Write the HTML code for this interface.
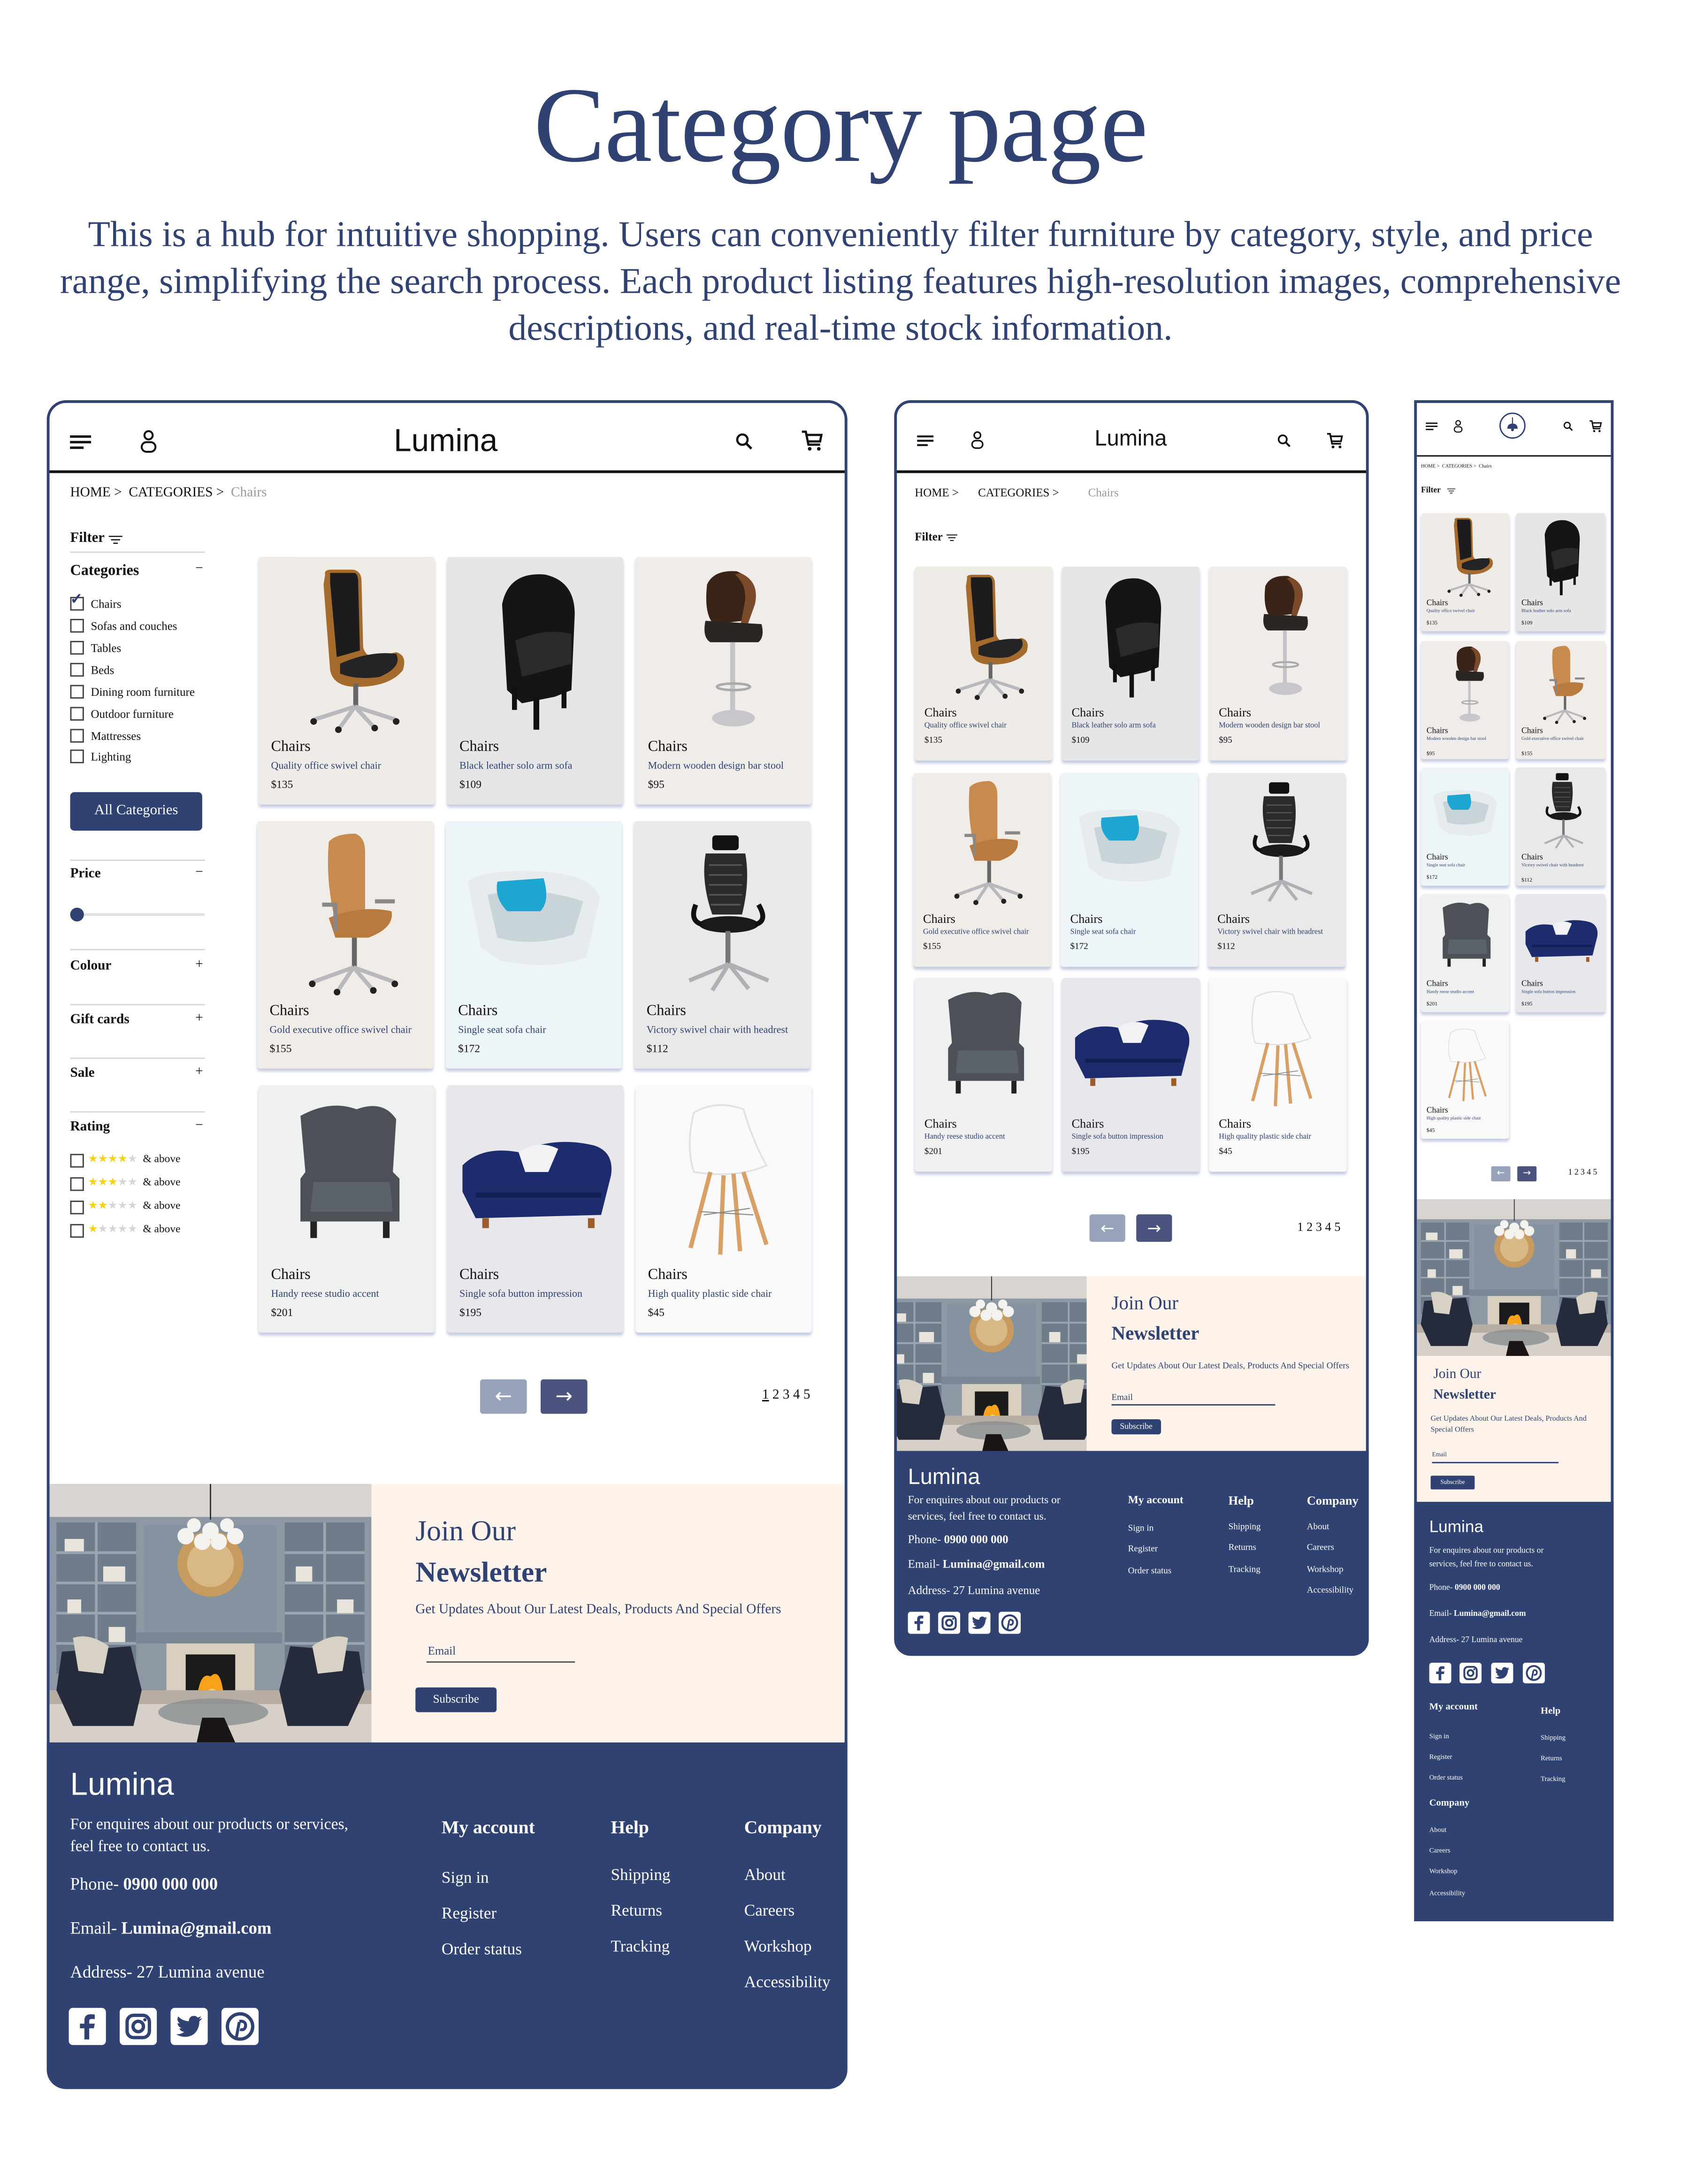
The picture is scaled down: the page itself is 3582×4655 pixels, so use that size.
<!DOCTYPE html>
<html><head><meta charset="utf-8">
<style>
html,body{margin:0;padding:0;background:#fff}
body{width:3582px;height:4653px;overflow:hidden;position:relative}
#w{position:absolute;left:0;top:0;width:1222px;height:1588px;transform:scale(2.93126);transform-origin:0 0;font-family:"Liberation Serif",serif;color:#111}
.t{position:absolute;line-height:1;white-space:nowrap}
.b{position:absolute}
.nv{color:#2f4272}
.frame{position:absolute;border:2px solid #2f4272;box-sizing:border-box;pointer-events:none;z-index:5}
.card{position:absolute;box-shadow:0 2px 2px rgba(150,160,200,.55);border-radius:2px;overflow:hidden}
.card svg{position:absolute;left:0;width:100%}
.card .t{left:0}
.D .card svg{top:8px;height:120px}
.D .c1{left:9px;top:133px;font-size:11px}
.D .c2{left:9px;top:148px;font-size:7.5px;color:#2f4272}
.D .c3{left:9px;top:162px;font-size:8px}
.T .card svg{top:5px;height:92px}
.T .c1{left:7px;top:102px;font-size:9px}
.T .c2{left:7px;top:114px;font-size:5.6px;color:#2f4272}
.T .c3{left:7px;top:124px;font-size:6.5px}
.M .card svg{top:3px;height:58px}
.M .c1{left:4px;top:63px;font-size:6px}
.M .c2{left:4px;top:70px;font-size:3.3px;color:#2f4272;white-space:normal;width:58px;line-height:1.1}
.M .c3{left:4px;top:78px;font-size:4px}
.cb{position:absolute;width:8px;height:8px;border:1px solid #444;background:#fff}
.hr{position:absolute;height:1px;background:#d8d8d8}
.star{color:#f7d117}.gs{color:#d6d6d6}
.wt{color:#fff}
</style></head><body>
<svg width="0" height="0" style="position:absolute">
<defs>
<symbol id="c1" viewBox="0 0 100 100">
<path d="M37 4 Q36 1 41 1 L54 1 Q59 2 59 8 L60 48 Q62 56 72 53 L80 51 Q87 53 84 62 Q76 72 56 72 Q42 72 40 62 L36 10Z" fill="#a56b2d"/>
<path d="M40 3 L55 3 Q57 4 57 9 L58 50 L44 54 L40 9Z" fill="#1c1c1e"/>
<path d="M46 58 Q64 50 80 52 Q84 60 70 66 Q56 68 46 64Z" fill="#242426"/>
<rect x="54" y="70" width="3" height="14" fill="#666"/>
<path d="M55 84 L30 92 M55 84 L80 92 M55 84 L45 98 M55 84 L67 97" stroke="#b9b9bd" stroke-width="2.5" fill="none"/>
<g fill="#222"><circle cx="30" cy="93" r="2"/><circle cx="80" cy="93" r="2"/><circle cx="45" cy="98" r="2"/><circle cx="67" cy="97" r="2"/></g>
</symbol>
<symbol id="c2" viewBox="0 0 100 100">
<path d="M30 22 Q34 2 56 4 Q74 8 74 28 L72 74 L62 78 L42 82 L33 74 Z" fill="#151516"/>
<path d="M38 44 Q56 36 72 40 L72 58 L42 66 Z" fill="#2a2a2c"/>
<rect x="36" y="72" width="3" height="14" fill="#111"/><rect x="49" y="78" width="3.5" height="20" fill="#111"/><rect x="66" y="72" width="3" height="13" fill="#111"/>
</symbol>
<symbol id="c3" viewBox="0 0 100 100">
<path d="M40 10 Q44 1 58 2 Q68 6 67 16 L62 32 L44 34 Q38 28 40 10Z" fill="#3a2418"/>
<path d="M60 3 Q72 8 69 22 L64 36 L60 36 L63 20 Q64 10 57 4Z" fill="#7a4a2a"/>
<path d="M39 32 L73 34 Q75 42 71 45 L42 45 Q37 42 39 32Z" fill="#2a2624"/>
<rect x="54" y="45" width="3" height="42" fill="#c3c3c8"/>
<ellipse cx="56" cy="72" rx="10" ry="2" fill="none" stroke="#aaa" stroke-width="1.5"/>
<ellipse cx="56" cy="91" rx="13" ry="5" fill="#c7c7cb"/>
</symbol>
<symbol id="c4" viewBox="0 0 100 100">
<path d="M40 6 Q44 1 56 1 Q62 3 62 12 L62 50 L44 54 Q38 30 40 6Z" fill="#c98b4d"/>
<path d="M40 52 Q60 44 78 48 Q80 58 64 64 L44 64Z" fill="#b97a3f"/>
<path d="M36 44 L44 44 L44 60 M68 42 L80 42" stroke="#888" stroke-width="2.5" fill="none"/>
<rect x="54" y="64" width="3" height="18" fill="#666"/>
<path d="M55 82 L30 91 M55 82 L80 91 M55 82 L45 97 M55 82 L67 96" stroke="#b9b9bd" stroke-width="2.5" fill="none"/>
<g fill="#222"><circle cx="30" cy="92" r="2"/><circle cx="80" cy="92" r="2"/><circle cx="45" cy="97" r="2"/><circle cx="67" cy="96" r="2"/></g>
</symbol>
<symbol id="c5" viewBox="0 0 100 100">
<path d="M10 30 Q20 22 56 24 Q86 26 90 40 L82 76 Q60 84 30 78 L18 70 Z" fill="#e6ecee"/>
<path d="M22 38 Q50 32 80 42 L74 62 Q50 70 28 64Z" fill="#c9d4d9"/>
<path d="M28 30 L56 28 Q60 42 54 48 L34 48 Q26 40 28 30Z" fill="#1ea6d2"/>
</symbol>
<symbol id="c6" viewBox="0 0 100 100">
<rect x="44" y="2" width="16" height="9" rx="2" fill="#111"/>
<path d="M40 13 L64 13 Q67 30 62 50 L44 50 Q37 30 40 13Z" fill="#2a2a2c"/>
<path d="M42 20 L62 20 M42 26 L62 26 M42 32 L62 32 M42 38 L62 38 M43 44 L61 44" stroke="#555" stroke-width="1"/>
<ellipse cx="54" cy="56" rx="18" ry="5" fill="#1a1a1a"/>
<path d="M34 44 Q30 54 38 56 M72 44 Q78 54 70 56" stroke="#111" stroke-width="3" fill="none"/>
<rect x="52" y="60" width="3" height="20" fill="#777"/>
<path d="M54 80 L30 90 M54 80 L78 90 M54 80 L44 96 M54 80 L66 95" stroke="#b0b0b4" stroke-width="2.5" fill="none"/>
</symbol>
<symbol id="c7" viewBox="0 0 100 100">
<path d="M22 12 Q40 2 56 8 Q72 2 80 14 L78 46 L82 50 L82 76 L22 76 L22 50 L25 46 Z" fill="#4b5157"/>
<path d="M30 52 L76 52 L78 70 L28 70Z" fill="#5c6269"/>
<rect x="28" y="76" width="4" height="10" fill="#222"/><rect x="72" y="76" width="4" height="10" fill="#222"/>
</symbol>
<symbol id="c8" viewBox="0 0 100 100">
<path d="M6 42 Q18 30 40 34 Q62 24 86 30 Q98 34 96 48 L90 72 L14 74 L6 58Z" fill="#1c2c6c"/>
<path d="M40 34 Q52 26 64 32 L58 46 L44 46Z" fill="#f2f2f4"/>
<path d="M14 60 L90 60" stroke="#102050" stroke-width="3"/>
<rect x="18" y="74" width="4" height="6" fill="#9a5c2a"/><rect x="82" y="74" width="4" height="6" fill="#9a5c2a"/>
</symbol>
<symbol id="c9" viewBox="0 0 100 100">
<path d="M32 10 Q46 2 62 8 Q68 28 76 42 Q58 50 32 46 Q27 30 32 10Z" fill="#fafafa" stroke="#e0e0e6"/>
<path d="M42 46 L30 92 M62 46 L76 90 M50 48 L48 96 M56 47 L60 94" stroke="#d9a066" stroke-width="2.6" fill="none"/>
<path d="M36 70 L68 72 M38 72 L66 68" stroke="#888" stroke-width=".6"/>
</symbol>
<symbol id="room" viewBox="0 0 235 188" preserveAspectRatio="xMidYMid slice">
<rect width="235" height="188" fill="#8d98a4"/>
<rect width="235" height="24" fill="#d8d4cf"/>
<rect x="6" y="28" width="58" height="110" fill="#6f7c8a"/><rect x="172" y="28" width="58" height="110" fill="#6f7c8a"/>
<g stroke="#9aa5b0" stroke-width="2"><path d="M6 50h58M6 72h58M6 94h58M6 116h58M172 50h58M172 72h58M172 94h58M172 116h58M35 28v90M201 28v90"/></g>
<g fill="#e8e4dc"><rect x="12" y="40" width="14" height="9"/><rect x="40" y="60" width="16" height="11"/><rect x="180" y="60" width="12" height="11"/><rect x="210" y="84" width="12" height="10"/><rect x="14" y="84" width="10" height="10"/><rect x="44" y="104" width="12" height="11"/></g>
<rect x="70" y="30" width="96" height="85" fill="#8592a0"/>
<circle cx="118" cy="58" r="24" fill="#c79b5f"/><circle cx="118" cy="58" r="17" fill="#d8b884"/>
<g fill="#f4f2ee"><circle cx="100" cy="38" r="6"/><circle cx="112" cy="42" r="6"/><circle cx="124" cy="42" r="6"/><circle cx="136" cy="38" r="6"/><circle cx="106" cy="30" r="5"/><circle cx="130" cy="30" r="5"/><circle cx="118" cy="34" r="6"/></g>
<path d="M118 0v26" stroke="#333"/>
<rect x="64" y="108" width="106" height="8" fill="#7a8795"/>
<rect x="86" y="116" width="64" height="46" fill="#d9cfbf"/><rect x="100" y="124" width="36" height="36" fill="#1a1a1a"/>
<path d="M108 158 Q110 136 118 140 Q126 132 128 158Z" fill="#f7a21a"/><path d="M112 158 Q116 146 122 150 Q124 150 124 158Z" fill="#ffe07a"/>
<rect x="0" y="150" width="235" height="38" fill="#b7ada2"/>
<path d="M0 160 L235 160 L235 188 L0 188Z" fill="#d6d0c8"/>
<path d="M10 122 L60 118 L68 150 L62 176 L18 176 L6 150Z" fill="#262b3c"/><path d="M18 112 Q30 108 44 118 L40 138 L22 136Z" fill="#d8d2c6"/>
<path d="M226 122 L176 118 L168 150 L174 176 L218 176 L230 150Z" fill="#262b3c"/><path d="M218 112 Q206 108 192 118 L196 138 L214 136Z" fill="#d8d2c6"/>
<ellipse cx="120" cy="166" rx="40" ry="10" fill="#8a8e92" opacity=".8"/><path d="M112 170 L108 188 L136 188 L128 170Z" fill="#1a1414"/>
</symbol>
<symbol id="fb" viewBox="0 0 20 20"><path d="M11 17 V11 H13.5 L14 8.5 H11 V7 Q11 6 12.2 6 H14 V3.6 Q13 3.4 11.8 3.4 Q8.4 3.4 8.4 6.8 V8.5 H6 V11 H8.4 V17Z" fill="#2f4272"/></symbol>
<symbol id="ig" viewBox="0 0 20 20"><rect x="4" y="4" width="12" height="12" rx="3.5" fill="none" stroke="#2f4272" stroke-width="1.8"/><circle cx="10" cy="10" r="2.8" fill="none" stroke="#2f4272" stroke-width="1.8"/><circle cx="13.6" cy="6.4" r=".9" fill="#2f4272"/></symbol>
<symbol id="tw" viewBox="0 0 20 20"><path d="M17 5.5 Q16 6 15.2 6.1 Q16.1 5.5 16.4 4.5 Q15.5 5 14.6 5.2 Q13.8 4.3 12.5 4.3 Q10 4.4 9.8 7.2 Q6.4 7 4.1 4.6 Q3 6.8 5 8.4 Q4.3 8.4 3.8 8.1 Q3.8 10.2 6 10.9 Q5.3 11.1 4.7 11 Q5.4 12.8 7.4 12.9 Q5.6 14.3 3 14.2 Q5.2 15.6 8 15.6 Q13.8 15.4 15.3 9.4 Q15.5 8.4 15.5 7.2 Q16.5 6.5 17 5.5Z" fill="#2f4272"/></symbol>
<symbol id="pi" viewBox="0 0 20 20"><circle cx="10" cy="10" r="6.8" fill="none" stroke="#2f4272" stroke-width="1.8"/><path d="M9.6 7.2 Q13 6.8 13 9.6 Q12.6 12.4 10 11.6 M9.6 7.6 L8 16" stroke="#2f4272" stroke-width="1.6" fill="none"/></symbol>
<symbol id="ham" viewBox="0 0 20 12"><path d="M1 1.5h17M1 6h17M1 10.5h11" stroke="#111" stroke-width="2"/></symbol>
<symbol id="usr" viewBox="0 0 14 18"><circle cx="7" cy="4.5" r="3" fill="none" stroke="#111" stroke-width="1.4"/><rect x="2" y="9.5" width="10" height="7" rx="3.5" fill="none" stroke="#111" stroke-width="1.4"/></symbol>
<symbol id="srch" viewBox="0 0 16 16"><circle cx="6.5" cy="6.5" r="4.3" fill="none" stroke="#111" stroke-width="1.8"/><path d="M9.6 9.6 L14 14" stroke="#111" stroke-width="2"/></symbol>
<symbol id="cart" viewBox="0 0 18 18"><path d="M1 2 H4 L6 12 H15 M4.6 4.5 H16 L15 9.5 H5.6" fill="none" stroke="#111" stroke-width="1.7"/><circle cx="7" cy="15.2" r="1.4" fill="#111"/><circle cx="14" cy="15.2" r="1.4" fill="#111"/></symbol>
<symbol id="flt" viewBox="0 0 12 8"><path d="M0 1h12M2 4h8M4 7h4" stroke="#111" stroke-width="1"/></symbol>
</defs></svg>

<div id="w">
<!-- Title -->
<div class="t nv" style="left:0;width:1222px;text-align:center;top:52px;font-size:78px;letter-spacing:-0.5px">Category page</div>
<div class="t nv" style="left:0;width:1222px;text-align:center;top:157px;font-size:26.5px">This is a hub for intuitive shopping. Users can conveniently filter furniture by category, style, and price</div>
<div class="t nv" style="left:0;width:1222px;text-align:center;top:191px;font-size:26.5px">range, simplifying the search process. Each product listing features high-resolution images, comprehensive</div>
<div class="t nv" style="left:0;width:1222px;text-align:center;top:225px;font-size:26.5px">descriptions, and real-time stock information.</div>

<!-- ================= DESKTOP ================= -->
<div class="D">
<div class="frame" style="left:34px;top:291px;width:582px;height:1228px;border-radius:14px"></div>
<svg class="b" style="left:50px;top:316px" width="18" height="11"><use href="#ham"/></svg>
<svg class="b" style="left:101px;top:312px" width="14" height="18"><use href="#usr"/></svg>
<div class="t" style="left:224px;width:200px;text-align:center;top:309px;font-size:23px;font-family:'Liberation Sans',sans-serif">Lumina</div>
<svg class="b" style="left:534px;top:314px" width="14" height="14"><use href="#srch"/></svg>
<svg class="b" style="left:582px;top:312px" width="17" height="17"><use href="#cart"/></svg>
<div class="b" style="left:35px;top:342px;width:580px;height:1.5px;background:#111"></div>
<div class="t" style="left:51px;top:354px;font-size:10px">HOME &gt;&nbsp; CATEGORIES &gt;&nbsp; <span style="color:#999">Chairs</span></div>
<div class="t" style="left:51px;top:387px;font-size:10.5px;font-weight:bold">Filter</div>
<svg class="b" style="left:79px;top:389px" width="10" height="7"><use href="#flt"/></svg>
<div class="hr" style="left:51px;top:401px;width:98px"></div>
<div class="t" style="left:51px;top:410px;font-size:11px;font-weight:bold">Categories</div>
<div class="t" style="left:142px;top:409px;font-size:10px">−</div>
<div class="cb" style="left:51px;top:434px"></div><div class="t nv" style="left:51px;top:431px;font-size:11px;font-weight:bold">✓</div>
<div class="t" style="left:66px;top:435px;font-size:8.5px">Chairs</div>
<div class="cb" style="left:51px;top:450px"></div><div class="t" style="left:66px;top:451px;font-size:8.5px">Sofas and couches</div>
<div class="cb" style="left:51px;top:466px"></div><div class="t" style="left:66px;top:467px;font-size:8.5px">Tables</div>
<div class="cb" style="left:51px;top:482px"></div><div class="t" style="left:66px;top:483px;font-size:8.5px">Beds</div>
<div class="cb" style="left:51px;top:498px"></div><div class="t" style="left:66px;top:499px;font-size:8.5px">Dining room furniture</div>
<div class="cb" style="left:51px;top:514px"></div><div class="t" style="left:66px;top:515px;font-size:8.5px">Outdoor furniture</div>
<div class="cb" style="left:51px;top:530px"></div><div class="t" style="left:66px;top:531px;font-size:8.5px">Mattresses</div>
<div class="cb" style="left:51px;top:545px"></div><div class="t" style="left:66px;top:546px;font-size:8.5px">Lighting</div>
<div class="b" style="left:51px;top:576px;width:96px;height:28px;background:#2f4272;border-radius:3px"></div>
<div class="t wt" style="left:51px;width:96px;text-align:center;top:585px;font-size:10.5px">All Categories</div>
<div class="hr" style="left:51px;top:625px;width:98px"></div>
<div class="t" style="left:51px;top:631px;font-size:10px;font-weight:bold">Price</div><div class="t" style="left:142px;top:630px;font-size:10px">−</div>
<div class="b" style="left:51px;top:664px;width:98px;height:2px;background:#e2e2e2;border-radius:1px"></div>
<div class="b" style="left:51px;top:660px;width:10px;height:10px;background:#2f4272;border-radius:50%"></div>
<div class="hr" style="left:51px;top:690px;width:98px"></div>
<div class="t" style="left:51px;top:698px;font-size:10px;font-weight:bold">Colour</div><div class="t" style="left:142px;top:697px;font-size:10px">+</div>
<div class="hr" style="left:51px;top:730px;width:98px"></div>
<div class="t" style="left:51px;top:737px;font-size:10px;font-weight:bold">Gift cards</div><div class="t" style="left:142px;top:736px;font-size:10px">+</div>
<div class="hr" style="left:51px;top:769px;width:98px"></div>
<div class="t" style="left:51px;top:776px;font-size:10px;font-weight:bold">Sale</div><div class="t" style="left:142px;top:775px;font-size:10px">+</div>
<div class="hr" style="left:51px;top:808px;width:98px"></div>
<div class="t" style="left:51px;top:815px;font-size:10px;font-weight:bold">Rating</div><div class="t" style="left:142px;top:814px;font-size:10px">−</div>
<div class="cb" style="left:51px;top:839px"></div><div class="t" style="left:64px;top:839px;font-size:8px"><span class="star">★★★★</span><span class="gs">★</span> &nbsp;&amp; above</div>
<div class="cb" style="left:51px;top:856px"></div><div class="t" style="left:64px;top:856px;font-size:8px"><span class="star">★★★</span><span class="gs">★★</span> &nbsp;&amp; above</div>
<div class="cb" style="left:51px;top:873px"></div><div class="t" style="left:64px;top:873px;font-size:8px"><span class="star">★★</span><span class="gs">★★★</span> &nbsp;&amp; above</div>
<div class="cb" style="left:51px;top:890px"></div><div class="t" style="left:64px;top:890px;font-size:8px"><span class="star">★</span><span class="gs">★★★★</span> &nbsp;&amp; above</div>

<div class="card" style="left:188px;top:405px;width:128px;height:180px;background:#efece8"><svg viewBox="0 0 100 100"><use href="#c1"/></svg><div class="t c1">Chairs</div><div class="t c2">Quality office swivel chair</div><div class="t c3">$135</div></div>
<div class="card" style="left:325px;top:405px;width:128px;height:180px;background:#e6e6e7"><svg viewBox="0 0 100 100"><use href="#c2"/></svg><div class="t c1">Chairs</div><div class="t c2">Black leather solo arm sofa</div><div class="t c3">$109</div></div>
<div class="card" style="left:462px;top:405px;width:128px;height:180px;background:#efecea"><svg viewBox="0 0 100 100"><use href="#c3"/></svg><div class="t c1">Chairs</div><div class="t c2">Modern wooden design bar stool</div><div class="t c3">$95</div></div>
<div class="card" style="left:187px;top:597px;width:128px;height:180px;background:#f0ece8"><svg viewBox="0 0 100 100"><use href="#c4"/></svg><div class="t c1">Chairs</div><div class="t c2">Gold executive office swivel chair</div><div class="t c3">$155</div></div>
<div class="card" style="left:324px;top:597px;width:128px;height:180px;background:#eef5f8"><svg viewBox="0 0 100 100"><use href="#c5"/></svg><div class="t c1">Chairs</div><div class="t c2">Single seat sofa chair</div><div class="t c3">$172</div></div>
<div class="card" style="left:461px;top:597px;width:128px;height:180px;background:#e9e9ea"><svg viewBox="0 0 100 100"><use href="#c6"/></svg><div class="t c1">Chairs</div><div class="t c2">Victory swivel chair with headrest</div><div class="t c3">$112</div></div>
<div class="card" style="left:188px;top:789px;width:128px;height:180px;background:#eff0f0"><svg viewBox="0 0 100 100"><use href="#c7"/></svg><div class="t c1">Chairs</div><div class="t c2">Handy reese studio accent</div><div class="t c3">$201</div></div>
<div class="card" style="left:325px;top:789px;width:128px;height:180px;background:#e8e8ec"><svg viewBox="0 0 100 100"><use href="#c8"/></svg><div class="t c1">Chairs</div><div class="t c2">Single sofa button impression</div><div class="t c3">$195</div></div>
<div class="card" style="left:462px;top:789px;width:128px;height:180px;background:#f9f9fa"><svg viewBox="0 0 100 100"><use href="#c9"/></svg><div class="t c1">Chairs</div><div class="t c2">High quality plastic side chair</div><div class="t c3">$45</div></div>

<div class="b" style="left:349px;top:1003px;width:34px;height:25px;background:#97a2bb;border-radius:2px"></div>
<div class="t wt" style="left:349px;width:34px;text-align:center;top:1008px;font-size:15px;font-family:'DejaVu Sans',sans-serif">←</div>
<div class="b" style="left:393px;top:1003px;width:34px;height:25px;background:#4b547e;border-radius:2px"></div>
<div class="t wt" style="left:393px;width:34px;text-align:center;top:1008px;font-size:15px;font-family:'DejaVu Sans',sans-serif">→</div>
<div class="t" style="left:554px;top:1010px;font-size:10px"><span style="text-decoration:underline">1</span> 2 3 4 5</div>

<svg class="b" style="left:35px;top:1079px" width="235" height="188"><use href="#room"/></svg>
<div class="b" style="left:270px;top:1079px;width:344px;height:188px;background:#fdf3ea"></div>
<div class="t nv" style="left:302px;top:1103px;font-size:21px">Join Our</div>
<div class="t nv" style="left:302px;top:1133px;font-size:21px;font-weight:bold">Newsletter</div>
<div class="t nv" style="left:302px;top:1166px;font-size:10px">Get Updates About Our Latest Deals, Products And Special Offers</div>
<div class="t nv" style="left:311px;top:1196px;font-size:8.5px">Email</div>
<div class="b" style="left:310px;top:1208px;width:108px;height:1px;background:#555"></div>
<div class="b" style="left:302px;top:1227px;width:59px;height:18px;background:#2f4272;border-radius:2px"></div>
<div class="t wt" style="left:302px;width:59px;text-align:center;top:1231px;font-size:8.5px">Subscribe</div>

<div class="b" style="left:34px;top:1267px;width:582px;height:252px;background:#2f4272;border-radius:0 0 14px 14px"></div>
<div class="t wt" style="left:51px;top:1286px;font-size:23px;font-family:'Liberation Sans',sans-serif">Lumina</div>
<div class="t wt" style="left:51px;top:1322px;font-size:11.5px">For enquires about our products or services,</div>
<div class="t wt" style="left:51px;top:1338px;font-size:11.5px">feel free to contact us.</div>
<div class="t wt" style="left:51px;top:1364px;font-size:12.5px">Phone- <b>0900 000 000</b></div>
<div class="t wt" style="left:51px;top:1396px;font-size:12.5px">Email- <b>Lumina@gmail.com</b></div>
<div class="t wt" style="left:51px;top:1428px;font-size:12.5px">Address- 27 Lumina avenue</div>
<div class="t wt" style="left:321px;top:1322px;font-size:13.5px;font-weight:bold">My account</div>
<div class="t wt" style="left:444px;top:1322px;font-size:13.5px;font-weight:bold">Help</div>
<div class="t wt" style="left:541px;top:1322px;font-size:13.5px;font-weight:bold">Company</div>
<div class="t wt" style="left:321px;top:1359px;font-size:12px">Sign in</div>
<div class="t wt" style="left:321px;top:1385px;font-size:12px">Register</div>
<div class="t wt" style="left:321px;top:1411px;font-size:12px">Order status</div>
<div class="t wt" style="left:444px;top:1357px;font-size:12px">Shipping</div>
<div class="t wt" style="left:444px;top:1383px;font-size:12px">Returns</div>
<div class="t wt" style="left:444px;top:1409px;font-size:12px">Tracking</div>
<div class="t wt" style="left:541px;top:1357px;font-size:12px">About</div>
<div class="t wt" style="left:541px;top:1383px;font-size:12px">Careers</div>
<div class="t wt" style="left:541px;top:1409px;font-size:12px">Workshop</div>
<div class="t wt" style="left:541px;top:1435px;font-size:12px">Accessibility</div>
<div class="b" style="left:50px;top:1460px;width:27px;height:27px;background:#fff;border-radius:3px"><svg width="27" height="27"><use href="#fb"/></svg></div>
<div class="b" style="left:87px;top:1460px;width:27px;height:27px;background:#fff;border-radius:3px"><svg width="27" height="27"><use href="#ig"/></svg></div>
<div class="b" style="left:124px;top:1460px;width:27px;height:27px;background:#fff;border-radius:3px"><svg width="27" height="27"><use href="#tw"/></svg></div>
<div class="b" style="left:161px;top:1460px;width:27px;height:27px;background:#fff;border-radius:3px"><svg width="27" height="27"><use href="#pi"/></svg></div>
</div>

<!-- ================= TABLET ================= -->
<div class="T">
<div class="frame" style="left:650px;top:291px;width:345px;height:913px;border-radius:12px"></div>
<svg class="b" style="left:666px;top:316px" width="14" height="9"><use href="#ham"/></svg>
<svg class="b" style="left:705px;top:313px" width="11" height="14"><use href="#usr"/></svg>
<div class="t" style="left:752px;width:140px;text-align:center;top:312px;font-size:16px;font-family:'Liberation Sans',sans-serif">Lumina</div>
<svg class="b" style="left:928px;top:315px" width="11" height="11"><use href="#srch"/></svg>
<svg class="b" style="left:964px;top:314px" width="13" height="13"><use href="#cart"/></svg>
<div class="b" style="left:651px;top:342px;width:343px;height:1.5px;background:#111"></div>
<div class="t" style="left:665px;top:354px;font-size:8.5px">HOME &gt;</div>
<div class="t" style="left:711px;top:354px;font-size:8.5px">CATEGORIES &gt;</div>
<div class="t" style="left:791px;top:354px;font-size:8.5px;color:#999">Chairs</div>
<div class="t" style="left:665px;top:386px;font-size:8.5px;font-weight:bold">Filter</div>
<svg class="b" style="left:688px;top:388px" width="8" height="6"><use href="#flt"/></svg>

<div class="card" style="left:665px;top:412px;width:100px;height:141px;background:#efece8"><svg viewBox="0 0 100 100"><use href="#c1"/></svg><div class="t c1">Chairs</div><div class="t c2">Quality office swivel chair</div><div class="t c3">$135</div></div>
<div class="card" style="left:772px;top:412px;width:100px;height:141px;background:#e6e6e7"><svg viewBox="0 0 100 100"><use href="#c2"/></svg><div class="t c1">Chairs</div><div class="t c2">Black leather solo arm sofa</div><div class="t c3">$109</div></div>
<div class="card" style="left:879px;top:412px;width:100px;height:141px;background:#efecea"><svg viewBox="0 0 100 100"><use href="#c3"/></svg><div class="t c1">Chairs</div><div class="t c2">Modern wooden design bar stool</div><div class="t c3">$95</div></div>
<div class="card" style="left:664px;top:562px;width:100px;height:141px;background:#f0ece8"><svg viewBox="0 0 100 100"><use href="#c4"/></svg><div class="t c1">Chairs</div><div class="t c2">Gold executive office swivel chair</div><div class="t c3">$155</div></div>
<div class="card" style="left:771px;top:562px;width:100px;height:141px;background:#eef5f8"><svg viewBox="0 0 100 100"><use href="#c5"/></svg><div class="t c1">Chairs</div><div class="t c2">Single seat sofa chair</div><div class="t c3">$172</div></div>
<div class="card" style="left:878px;top:562px;width:100px;height:141px;background:#e9e9ea"><svg viewBox="0 0 100 100"><use href="#c6"/></svg><div class="t c1">Chairs</div><div class="t c2">Victory swivel chair with headrest</div><div class="t c3">$112</div></div>
<div class="card" style="left:665px;top:711px;width:100px;height:141px;background:#eff0f0"><svg viewBox="0 0 100 100"><use href="#c7"/></svg><div class="t c1">Chairs</div><div class="t c2">Handy reese studio accent</div><div class="t c3">$201</div></div>
<div class="card" style="left:772px;top:711px;width:100px;height:141px;background:#e8e8ec"><svg viewBox="0 0 100 100"><use href="#c8"/></svg><div class="t c1">Chairs</div><div class="t c2">Single sofa button impression</div><div class="t c3">$195</div></div>
<div class="card" style="left:879px;top:711px;width:100px;height:141px;background:#f9f9fa"><svg viewBox="0 0 100 100"><use href="#c9"/></svg><div class="t c1">Chairs</div><div class="t c2">High quality plastic side chair</div><div class="t c3">$45</div></div>

<div class="b" style="left:792px;top:883px;width:26px;height:20px;background:#97a2bb;border-radius:2px"></div>
<div class="t wt" style="left:792px;width:26px;text-align:center;top:887px;font-size:12px;font-family:'DejaVu Sans',sans-serif">←</div>
<div class="b" style="left:826px;top:883px;width:26px;height:20px;background:#4b547e;border-radius:2px"></div>
<div class="t wt" style="left:826px;width:26px;text-align:center;top:887px;font-size:12px;font-family:'DejaVu Sans',sans-serif">→</div>
<div class="t" style="left:943px;top:888px;font-size:9px">1 2 3 4 5</div>

<svg class="b" style="left:651px;top:928px" width="139" height="127"><use href="#room"/></svg>
<div class="b" style="left:790px;top:928px;width:204px;height:127px;background:#fdf3ea"></div>
<div class="t nv" style="left:808px;top:942px;font-size:14px">Join Our</div>
<div class="t nv" style="left:808px;top:964px;font-size:14px;font-weight:bold">Newsletter</div>
<div class="t nv" style="left:808px;top:990px;font-size:6.5px;width:175px;white-space:normal;line-height:1.35">Get Updates About Our Latest Deals, Products And Special Offers</div>
<div class="t nv" style="left:808px;top:1014px;font-size:6.5px">Email</div>
<div class="b" style="left:808px;top:1021px;width:119px;height:1px;background:#2f4272"></div>
<div class="b" style="left:808px;top:1032px;width:36px;height:11px;background:#2f4272;border-radius:2px"></div>
<div class="t wt" style="left:808px;width:36px;text-align:center;top:1034.5px;font-size:6px">Subscribe</div>

<div class="b" style="left:650px;top:1055px;width:345px;height:149px;background:#2f4272;border-radius:0 0 12px 12px"></div>
<div class="t wt" style="left:660px;top:1067px;font-size:16px;font-family:'Liberation Sans',sans-serif">Lumina</div>
<div class="t wt" style="left:660px;top:1087px;font-size:8px">For enquires about our products or</div>
<div class="t wt" style="left:660px;top:1099px;font-size:8px">services, feel free to contact us.</div>
<div class="t wt" style="left:660px;top:1115px;font-size:8.5px">Phone- <b>0900 000 000</b></div>
<div class="t wt" style="left:660px;top:1133px;font-size:8.5px">Email- <b>Lumina@gmail.com</b></div>
<div class="t wt" style="left:660px;top:1152px;font-size:8.5px">Address- 27 Lumina avenue</div>
<div class="t wt" style="left:820px;top:1087px;font-size:8px;font-weight:bold">My account</div>
<div class="t wt" style="left:893px;top:1087px;font-size:9px;font-weight:bold">Help</div>
<div class="t wt" style="left:950px;top:1087px;font-size:9px;font-weight:bold">Company</div>
<div class="t wt" style="left:820px;top:1109px;font-size:6.5px">Sign in</div>
<div class="t wt" style="left:820px;top:1124px;font-size:6.5px">Register</div>
<div class="t wt" style="left:820px;top:1140px;font-size:6.5px">Order status</div>
<div class="t wt" style="left:893px;top:1108px;font-size:6.5px">Shipping</div>
<div class="t wt" style="left:893px;top:1123px;font-size:6.5px">Returns</div>
<div class="t wt" style="left:893px;top:1139px;font-size:6.5px">Tracking</div>
<div class="t wt" style="left:950px;top:1108px;font-size:6.5px">About</div>
<div class="t wt" style="left:950px;top:1123px;font-size:6.5px">Careers</div>
<div class="t wt" style="left:950px;top:1139px;font-size:6.5px">Workshop</div>
<div class="t wt" style="left:950px;top:1154px;font-size:6.5px">Accessibility</div>
<div class="b" style="left:660px;top:1172px;width:16px;height:16px;background:#fff;border-radius:2px"><svg width="16" height="16"><use href="#fb"/></svg></div>
<div class="b" style="left:682px;top:1172px;width:16px;height:16px;background:#fff;border-radius:2px"><svg width="16" height="16"><use href="#ig"/></svg></div>
<div class="b" style="left:704px;top:1172px;width:16px;height:16px;background:#fff;border-radius:2px"><svg width="16" height="16"><use href="#tw"/></svg></div>
<div class="b" style="left:726px;top:1172px;width:16px;height:16px;background:#fff;border-radius:2px"><svg width="16" height="16"><use href="#pi"/></svg></div>
</div>

<!-- ================= MOBILE ================= -->
<div class="M">
<div class="frame" style="left:1028px;top:291px;width:145px;height:1106px"></div>
<svg class="b" style="left:1036px;top:307px" width="10" height="6"><use href="#ham"/></svg>
<svg class="b" style="left:1056px;top:305px" width="8" height="10"><use href="#usr"/></svg>
<div class="b" style="left:1090px;top:300px;width:19px;height:19px;border:1px solid #2f4272;border-radius:50%;box-sizing:border-box"></div>
<svg class="b" style="left:1092px;top:302px" width="15" height="15" viewBox="0 0 20 20"><path d="M10 2v7" stroke="#2f4272" stroke-width="1"/><path d="M5 13 Q5 8 10 8 Q15 8 15 13Z" fill="#2f4272"/><circle cx="10" cy="14" r="1.4" fill="#2f4272"/></svg>
<svg class="b" style="left:1136px;top:306px" width="8" height="8"><use href="#srch"/></svg>
<svg class="b" style="left:1155px;top:305px" width="10" height="10"><use href="#cart"/></svg>
<div class="b" style="left:1030px;top:331px;width:141px;height:1px;background:#111"></div>
<div class="t" style="left:1033px;top:338px;font-size:3.6px">HOME &gt; &nbsp;CATEGORIES &gt; &nbsp;Chairs</div>
<div class="t" style="left:1033px;top:354px;font-size:6px;font-weight:bold">Filter</div>
<svg class="b" style="left:1052px;top:355px" width="6" height="4"><use href="#flt"/></svg>

<div class="card" style="left:1033px;top:373px;width:64px;height:86px;background:#efece8"><svg viewBox="0 0 100 100"><use href="#c1"/></svg><div class="t c1">Chairs</div><div class="t c2">Quality office swivel chair</div><div class="t c3">$135</div></div>
<div class="card" style="left:1102px;top:373px;width:65px;height:86px;background:#e6e6e7"><svg viewBox="0 0 100 100"><use href="#c2"/></svg><div class="t c1">Chairs</div><div class="t c2">Black leather solo arm sofa</div><div class="t c3">$109</div></div>
<div class="card" style="left:1033px;top:466px;width:64px;height:86px;background:#efecea"><svg viewBox="0 0 100 100"><use href="#c3"/></svg><div class="t c1">Chairs</div><div class="t c2">Modern wooden design bar stool</div><div class="t c3" style="top:80px">$95</div></div>
<div class="card" style="left:1102px;top:466px;width:65px;height:86px;background:#f0ece8"><svg viewBox="0 0 100 100"><use href="#c4"/></svg><div class="t c1">Chairs</div><div class="t c2">Gold executive office swivel chair</div><div class="t c3" style="top:80px">$155</div></div>
<div class="card" style="left:1033px;top:558px;width:64px;height:86px;background:#eef5f8"><svg viewBox="0 0 100 100"><use href="#c5"/></svg><div class="t c1">Chairs</div><div class="t c2">Single seat sofa chair</div><div class="t c3">$172</div></div>
<div class="card" style="left:1102px;top:558px;width:65px;height:86px;background:#e9e9ea"><svg viewBox="0 0 100 100"><use href="#c6"/></svg><div class="t c1">Chairs</div><div class="t c2">Victory swivel chair with headrest</div><div class="t c3" style="top:80px">$112</div></div>
<div class="card" style="left:1033px;top:650px;width:64px;height:86px;background:#eff0f0"><svg viewBox="0 0 100 100"><use href="#c7"/></svg><div class="t c1">Chairs</div><div class="t c2">Handy reese studio accent</div><div class="t c3">$201</div></div>
<div class="card" style="left:1102px;top:650px;width:65px;height:86px;background:#e8e8ec"><svg viewBox="0 0 100 100"><use href="#c8"/></svg><div class="t c1">Chairs</div><div class="t c2">Single sofa button impression</div><div class="t c3">$195</div></div>
<div class="card" style="left:1033px;top:742px;width:64px;height:86px;background:#f9f9fa"><svg viewBox="0 0 100 100"><use href="#c9"/></svg><div class="t c1">Chairs</div><div class="t c2">High quality plastic side chair</div><div class="t c3">$45</div></div>

<div class="b" style="left:1084px;top:848px;width:14px;height:11px;background:#97a2bb;border-radius:1px"></div>
<div class="t wt" style="left:1084px;width:14px;text-align:center;top:850px;font-size:7px;font-family:'DejaVu Sans',sans-serif">←</div>
<div class="b" style="left:1103px;top:848px;width:14px;height:11px;background:#4b547e;border-radius:1px"></div>
<div class="t wt" style="left:1103px;width:14px;text-align:center;top:850px;font-size:7px;font-family:'DejaVu Sans',sans-serif">→</div>
<div class="t" style="left:1140px;top:850px;font-size:6px">1 2 3 4 5</div>

<svg class="b" style="left:1030px;top:872px" width="141" height="114"><use href="#room"/></svg>
<div class="b" style="left:1030px;top:986px;width:141px;height:106px;background:#fdf3ea"></div>
<div class="t nv" style="left:1042px;top:995px;font-size:10px">Join Our</div>
<div class="t nv" style="left:1042px;top:1010px;font-size:10px;font-weight:bold">Newsletter</div>
<div class="t nv" style="left:1040px;top:1029px;font-size:5.5px;width:125px;white-space:normal;line-height:1.4">Get Updates About Our Latest Deals, Products And Special Offers</div>
<div class="t nv" style="left:1041px;top:1056px;font-size:4.5px">Email</div>
<div class="b" style="left:1041px;top:1063px;width:92px;height:.6px;background:#2f4272"></div>
<div class="b" style="left:1040px;top:1073px;width:32px;height:10px;background:#2f4272;border-radius:1px"></div>
<div class="t wt" style="left:1040px;width:32px;text-align:center;top:1076px;font-size:4.5px">Subscribe</div>

<div class="b" style="left:1028px;top:1092px;width:145px;height:305px;background:#2f4272"></div>
<div class="t wt" style="left:1039px;top:1104px;font-size:12px;font-family:'Liberation Sans',sans-serif">Lumina</div>
<div class="t wt" style="left:1039px;top:1125px;font-size:6px">For enquires about our products or</div>
<div class="t wt" style="left:1039px;top:1135px;font-size:6px">services, feel free to contact us.</div>
<div class="t wt" style="left:1039px;top:1152px;font-size:6px">Phone- <b>0900 000 000</b></div>
<div class="t wt" style="left:1039px;top:1171px;font-size:6px">Email- <b>Lumina@gmail.com</b></div>
<div class="t wt" style="left:1039px;top:1190px;font-size:6px">Address- 27 Lumina avenue</div>
<div class="b" style="left:1039px;top:1209px;width:16px;height:15px;background:#fff;border-radius:2px"><svg width="16" height="15"><use href="#fb"/></svg></div>
<div class="b" style="left:1061px;top:1209px;width:16px;height:15px;background:#fff;border-radius:2px"><svg width="16" height="15"><use href="#ig"/></svg></div>
<div class="b" style="left:1084px;top:1209px;width:16px;height:15px;background:#fff;border-radius:2px"><svg width="16" height="15"><use href="#tw"/></svg></div>
<div class="b" style="left:1107px;top:1209px;width:16px;height:15px;background:#fff;border-radius:2px"><svg width="16" height="15"><use href="#pi"/></svg></div>
<div class="t wt" style="left:1039px;top:1238px;font-size:7px;font-weight:bold">My account</div>
<div class="t wt" style="left:1120px;top:1241px;font-size:7px;font-weight:bold">Help</div>
<div class="t wt" style="left:1039px;top:1261px;font-size:5px">Sign in</div>
<div class="t wt" style="left:1039px;top:1276px;font-size:5px">Register</div>
<div class="t wt" style="left:1039px;top:1291px;font-size:5px">Order status</div>
<div class="t wt" style="left:1120px;top:1262px;font-size:5px">Shipping</div>
<div class="t wt" style="left:1120px;top:1277px;font-size:5px">Returns</div>
<div class="t wt" style="left:1120px;top:1292px;font-size:5px">Tracking</div>
<div class="t wt" style="left:1039px;top:1308px;font-size:7px;font-weight:bold">Company</div>
<div class="t wt" style="left:1039px;top:1329px;font-size:5px">About</div>
<div class="t wt" style="left:1039px;top:1344px;font-size:5px">Careers</div>
<div class="t wt" style="left:1039px;top:1359px;font-size:5px">Workshop</div>
<div class="t wt" style="left:1039px;top:1375px;font-size:5px">Accessibility</div>
</div>
</div>
</body></html>
